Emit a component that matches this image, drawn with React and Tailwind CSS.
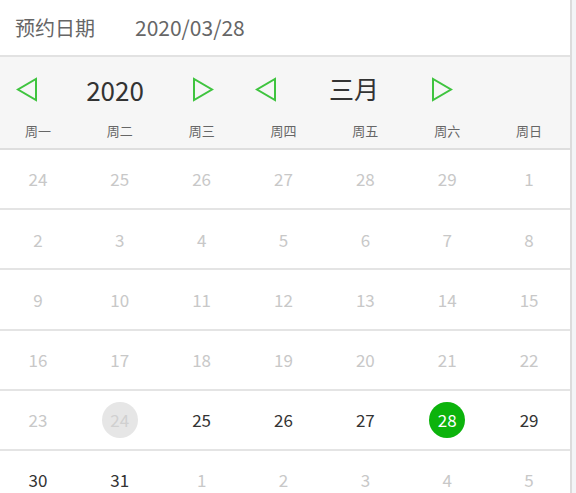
import { useState } from 'react'

const weekNames = ['周一', '周二', '周三', '周四', '周五', '周六', '周日']

// 6 rows x 7 cols; state: 'off' = disabled grey, 'on' = selectable
const rows = [
  [24, 25, 26, 27, 28, 29, 1].map((d) => ({ d, s: 'off' })),
  [2, 3, 4, 5, 6, 7, 8].map((d) => ({ d, s: 'off' })),
  [9, 10, 11, 12, 13, 14, 15].map((d) => ({ d, s: 'off' })),
  [16, 17, 18, 19, 20, 21, 22].map((d) => ({ d, s: 'off' })),
  [
    { d: 23, s: 'off' },
    { d: 24, s: 'today' },
    { d: 25, s: 'on' },
    { d: 26, s: 'on' },
    { d: 27, s: 'on' },
    { d: 28, s: 'on' },
    { d: 29, s: 'on' },
  ],
  [
    { d: 30, s: 'on' },
    { d: 31, s: 'on' },
    { d: 1, s: 'off' },
    { d: 2, s: 'off' },
    { d: 3, s: 'off' },
    { d: 4, s: 'off' },
    { d: 5, s: 'off' },
  ],
]

function Arrow({ dir }) {
  const pts = dir === 'left' ? '20,2 20,23 2,12.5' : '2,2 2,23 20,12.5'
  return (
    <svg width="22" height="25" viewBox="0 0 22 25" fill="none">
      <polygon points={pts} stroke="#3fc43f" strokeWidth="2" strokeLinejoin="miter" />
    </svg>
  )
}

export default function App() {
  const [selected, setSelected] = useState(28)

  return (
    <div
      className="w-[576px] h-[493px] overflow-hidden bg-[#f3f5f7]"
      style={{ fontFamily: '"Noto Sans CJK SC", "Noto Sans", sans-serif' }}
    >
      <div className="w-[572px] h-full overflow-hidden bg-white border-r-2 border-[#dcdcdc]">
        {/* 日期栏 */}
        <div className="h-[57px] flex items-center pl-[15px] text-[#666] border-b-2 border-[#e2e2e2]">
          <span className="w-[120px] text-[20px]">预约日期</span>
          <span className="text-[21px]">2020/03/{selected}</span>
        </div>

        {/* 年月切换 + 星期 */}
        <div className="bg-[#f6f6f6] border-b-2 border-[#dedede]">
          <div className="h-[64px] flex items-center pl-[7px]">
            <button className="w-[40px] flex justify-center"><Arrow dir="left" /></button>
            <span className="w-[136px] text-center text-[26px] text-[#333]">2020</span>
            <button className="w-[40px] flex justify-center"><Arrow dir="right" /></button>
            <button className="ml-[23px] w-[40px] flex justify-center"><Arrow dir="left" /></button>
            <span className="w-[136px] text-center text-[25px] text-[#333]">三月</span>
            <button className="w-[40px] flex justify-center"><Arrow dir="right" /></button>
          </div>
          <div className="grid grid-cols-7 w-[573px] -ml-[3px] h-[27px] items-start">
            {weekNames.map((w) => (
              <span key={w} className="text-center text-[13px] leading-[20px] text-[#666]">{w}</span>
            ))}
          </div>
        </div>

        {/* 日期格子 */}
        <div className="w-[573px] -ml-[3px]">
          {rows.map((r, i) => (
            <div key={i} className="grid grid-cols-7 h-[60.2px] border-b-2 border-[#e4e4e4]">
              {r.map((c, j) => {
                const isSel = c.s === 'on' && c.d === selected
                return (
                  <div key={j} className="flex items-center justify-center">
                    <button
                      onClick={() => c.s === 'on' && setSelected(c.d)}
                      className={`w-[36px] h-[36px] rounded-full flex items-center justify-center text-[17px] ${
                        isSel
                          ? 'bg-[#0cb30c] text-white'
                          : c.s === 'today'
                          ? 'bg-[#e6e6e6] text-[#d0d0d0]'
                          : c.s === 'on'
                          ? 'text-[#333]'
                          : 'text-[#c8c8c8]'
                      }`}
                    >
                      {c.d}
                    </button>
                  </div>
                )
              })}
            </div>
          ))}
        </div>
      </div>
    </div>
  )
}
